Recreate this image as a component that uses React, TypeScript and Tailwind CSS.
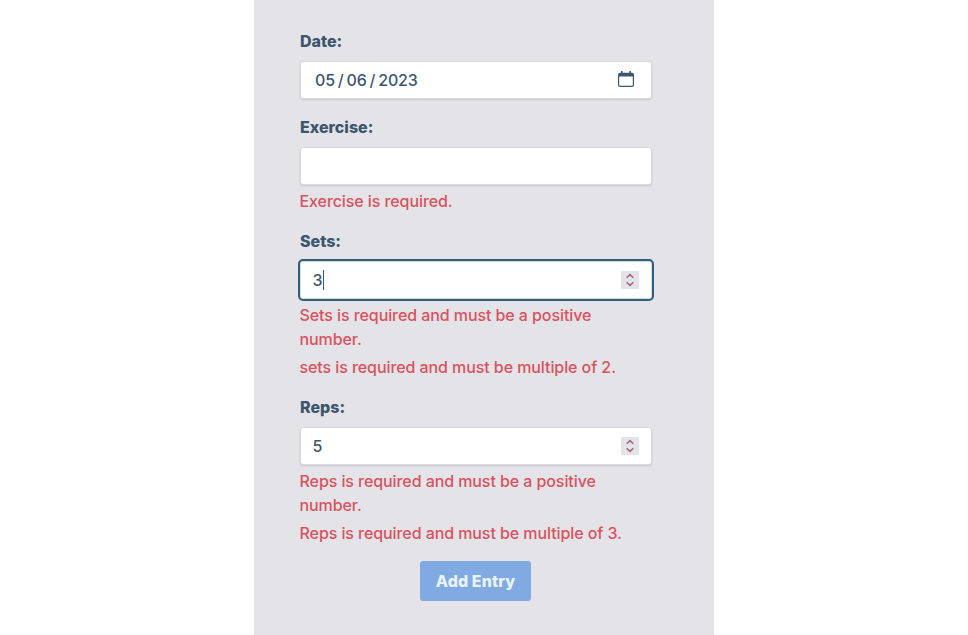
import type { ReactNode } from 'react';

const boxClass =
  'flex h-[38px] items-center rounded-[3px] border border-[#d8d8dc] bg-white font-medium text-[#3c566e] shadow-[0_1px_2px_rgba(0,0,0,0.12)]';

function Field({ label, errors = [], children }: { label: string; errors?: string[]; children: ReactNode }) {
  return (
    <div className="mb-4">
      <label className="mb-2 block font-extrabold text-[#3c566e]">{label}</label>
      {children}
      {errors.map((error) => (
        <p key={error} className="mt-1 -ml-[0.5px] font-medium tracking-[-0.08px] text-[#d9525e]">
          {error}
        </p>
      ))}
    </div>
  );
}

function Stepper() {
  return (
    <svg className="mr-3 ml-auto" width="18" height="18" viewBox="0 0 18 18" fill="none">
      <rect width="18" height="18" fill="#e3e3e8" />
      <path d="M5.7 6.7 9 3.6l3.3 3.1M5.7 11.3 9 14.4l3.3-3.1" stroke="#a0667a" strokeWidth="1.5" />
    </svg>
  );
}

function CalendarIcon() {
  return (
    <svg className="mr-[17px] mb-0.5 ml-auto" width="16" height="16" viewBox="0 0 16 16">
      <path
        d="M3 0h1.600v1.800h6.800V0H13v1.800h1Q16 1.800 16 3.800V14Q16 16 14 16H2Q0 16 0 14V3.800Q0 1.800 2 1.800h1ZM1.200 5.600V14q0 .8.8.8h12q.8 0 .8-.8V5.600Z"
        fill="#3c566e"
        fillRule="evenodd"
      />
    </svg>
  );
}

export default function App() {
  return (
    <div className="flex h-[635px] justify-center overflow-hidden bg-white font-['Inter',sans-serif] text-base">
      <form className="h-full w-[460px] bg-[#e3e3e8] pt-[29px] pr-[62px] pl-[46px]">
        <Field label="Date:">
          <div className={boxClass + ' pl-3.5 tracking-[-0.2px]'}>
            <span>05</span>
            <span className="px-[3px]">/</span>
            <span>06</span>
            <span className="px-[3px]">/</span>
            <span>2023</span>
            <CalendarIcon />
          </div>
        </Field>
        <Field label="Exercise:" errors={['Exercise is required.']}>
          <div className={boxClass} />
        </Field>
        <Field
          label="Sets:"
          errors={['Sets is required and must be a positive number.', 'sets is required and must be multiple of 2.']}
        >
          <div className={boxClass + ' pl-[11.5px] outline-2 outline-[#2d607c]'}>
            <span>3</span>
            <span className="h-5 w-px bg-[#3c566e]" />
            <Stepper />
          </div>
        </Field>
        <Field
          label="Reps:"
          errors={['Reps is required and must be a positive number.', 'Reps is required and must be multiple of 3.']}
        >
          <div className={boxClass + ' pl-[11.5px]'}>
            <span>5</span>
            <Stepper />
          </div>
        </Field>
        <div className="flex justify-center pr-px">
          <button type="button" className="h-10 w-[111px] rounded-[3px] bg-[#80aae1] font-extrabold tracking-[0.1px] text-[#e9f3fb]">
            Add Entry
          </button>
        </div>
      </form>
    </div>
  );
}
